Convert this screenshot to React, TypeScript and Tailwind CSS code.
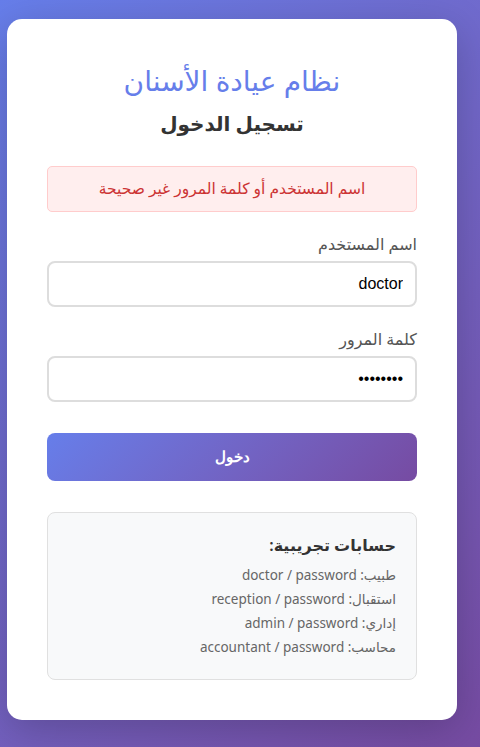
import React, { useState } from "react";

const demoAccounts = [
  { role: "طبيب", user: "doctor" },
  { role: "استقبال", user: "reception" },
  { role: "إداري", user: "admin" },
  { role: "محاسب", user: "accountant" },
];

export default function App() {
  const [username, setUsername] = useState("doctor");
  const [password, setPassword] = useState("password");

  return (
    <div
      dir="rtl"
      className="min-h-[747px] w-full bg-linear-135 from-[#667eea] to-[#764ba2] pt-[19px] pb-[27px] font-['Noto_Sans','DejaVu_Sans',sans-serif]"
    >
      <div dir="rtl" className="mr-[23px] w-[450px] rounded-[15px] bg-white p-10 shadow-[0_10px_40px_rgba(0,0,0,0.2)]">
        <h1 className="mb-2 text-center text-[28px] leading-[42px] font-medium text-[#667eea]">
          نظام عيادة الأسنان
        </h1>
        <h2 className="mb-[27px] text-center text-[20px] leading-[30px] font-semibold text-[#333]">
          تسجيل الدخول
        </h2>

        <div className="mb-5 flex h-[46px] items-center justify-center rounded-[5px] border border-[#fcc] bg-[#fee] text-[15.5px] text-[#c33]">
          اسم المستخدم أو كلمة المرور غير صحيحة
        </div>

        <form onSubmit={(e) => e.preventDefault()}>
          <div className="mb-5">
            <label className="mb-[5px] block text-[16px] leading-[24px] text-[#555]">
              اسم المستخدم
            </label>
            <input
              type="text"
              value={username}
              onChange={(e) => setUsername(e.target.value)}
              className="h-[46px] w-full rounded-lg border-2 border-[#ddd] px-3 font-['Liberation_Sans',Arial,sans-serif] text-[16px] text-black outline-none"
            />
          </div>

          <div className="mb-[31px]">
            <label className="mb-[5px] block text-[16px] leading-[24px] text-[#555]">
              كلمة المرور
            </label>
            <input
              type="password"
              value={password}
              onChange={(e) => setPassword(e.target.value)}
              className="h-[46px] w-full rounded-lg border-2 border-[#ddd] px-3 font-['Liberation_Sans',Arial,sans-serif] text-[16px] text-black outline-none"
            />
          </div>

          <button
            type="submit"
            className="h-12 w-full rounded-lg bg-linear-135 from-[#667eea] to-[#764ba2] font-['Liberation_Sans',Arial,sans-serif] text-[15px] font-bold text-white"
          >
            دخول
          </button>
        </form>

        <div className="mt-[31px] rounded-lg border border-[#e0e0e0] bg-[#f8f9fa] px-5 pt-[20px] pb-[20px] text-[#666]">
          <h3 className="mb-[6px] text-[16px] leading-[24px] font-semibold text-[#333]">
            حسابات تجريبية:
          </h3>
          {demoAccounts.map((a) => (
            <p key={a.user} className="text-[13.5px] leading-[24px]">
              {a.role}: {a.user} / password
            </p>
          ))}
        </div>
      </div>
    </div>
  );
}
